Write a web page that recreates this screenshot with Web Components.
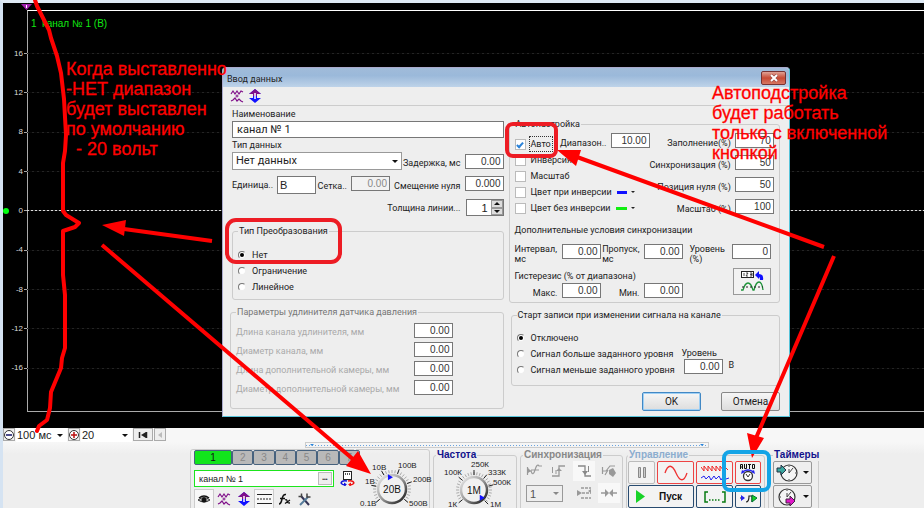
<!DOCTYPE html>
<html lang="ru">
<head>
<meta charset="utf-8">
<title>Осциллограф</title>
<style>
html, body { height: 100%; margin: 0; }
body { font: 9px/12px "Liberation Sans", sans-serif; color: #222; background: #eee; overflow: hidden; }
</style>
</head>
<body>
<app-window></app-window>
<script>
const base = `
*, *::before { box-sizing: border-box; }
:host { display: block; box-sizing: border-box; }
:host([hidden]) { display: none; }
button, input, select { font: inherit; color: inherit; margin: 0; padding: 0; border-radius: 0; }
button { display: grid; place-items: center; }
svg { display: block; fill: none; }
`;
function element(name, css, html) {
  customElements.define(name, class extends HTMLElement {
    connectedCallback() {
      if (this.shadowRoot) return;
      const a = (k, d = '') => this.getAttribute(k) ?? d;
      this.attachShadow({ mode: 'open' }).innerHTML =
        `<style>${base}${css}</style>${typeof html === 'function' ? html(a, this) : html}`;
    }
  });
}

/* ---------- small controls ---------- */
element('num-field', `
:host { display: flex; align-items: center; justify-content: flex-end; gap: 4px; }
label { line-height: 10px; flex: 1; text-align: right; white-space: nowrap; padding-top: 4px; }
:host([left]) label { text-align: left; }
:host([wrap]) label { white-space: pre-line; padding: 0; }
:host([dim]) label { color: #aaa; }
input { width: 39px; height: 15px; flex: none; border: 1px solid #777; background: #fff; text-align: right; font: 10px "Liberation Sans", sans-serif; padding-right: 2px; color: #333; outline: none; }
:host([bare]) label { display: none; }
input:disabled { background: #f2f2f2; color: #888; }
`, a => `<label for="f">${a('label')}</label><input id="f" aria-label="${a('label')}" value="${a('value')}" ${a('off', null) !== null ? 'disabled' : ''}>`);

element('choice-item', `
:host { display: block; }
label { display: flex; align-items: center; gap: 5px; height: 16px; white-space: nowrap; }
input { appearance: none; flex: none; width: 11px; height: 11px; display: grid; place-items: center; background: #fff; border: 1px solid #bbb; }
input[type=radio] { width: 8px; height: 8px; border-radius: 50%; border-color: #777 #eee #eee #777; }
:host([type=radio]) label { gap: 6px; }
input[type=radio]:checked::before { content: ""; width: 4px; height: 4px; border-radius: 50%; background: #000; }
input[type=checkbox]:checked::before { content: ""; width: 4px; height: 7px; border: solid #2a82d8; border-width: 0 2px 2px 0; transform: rotate(42deg); }
:host([focus]) span { outline: 1px dotted #333; outline-offset: 1px; }
i { width: 13px; height: 3px; background: var(--swatch); }
b { border: 2px solid transparent; border-top-color: #222; border-bottom: 0; margin-left: -1px; }
`, (a, el) => `<label><input type="${a('type', 'checkbox')}" ${el.hasAttribute('checked') ? 'checked' : ''}><span>${a('label')}</span>${el.hasAttribute('swatch') ? '<i></i><b></b>' : ''}</label>`);

element('group-box', `
fieldset { margin: 0; min-width: 0; border: 1px solid #ccc; border-radius: 3px; padding: var(--pad, 0 6px); height: 100%; }
legend { padding: 0 1px; margin-left: var(--legend, 0); line-height: 12px; white-space: nowrap; }
:host([dim]) legend { color: #777; }
:host([strong]) legend { font-weight: bold; font-size: 10px; color: var(--ink); }
`, a => `<fieldset><legend>${a('label')}</legend><slot></slot></fieldset>`);

element('drop-down', `
:host { display: grid; }
select { appearance: none; grid-area: 1/1; width: 100%; height: 100%; border: 1px solid var(--line, #999); background: var(--fill, #fff); padding-left: var(--inset, 3px); font-size: 11px; outline: none; }
i { grid-area: 1/1; place-self: center end; margin-right: 4px; border: 3px solid transparent; border-top-color: var(--arrow, #111); border-bottom: 0; pointer-events: none; }
`, a => `<select aria-label="${a('label')}"><option>${a('value')}</option></select><i></i>`);

element('rotary-knob', `svg { width: 100%; overflow: visible; font: 8px "Liberation Sans", sans-serif; }`, (a, el) => {
  const marks = JSON.parse(a('marks')), r = +a('r'), cx = +a('cx'), cy = +a('cy'), p = +a('point');
  let ticks = '';
  for (let d = -220; d <= 40; d += 10) {
    const t = d * Math.PI / 180;
    ticks += `<path d="M${cx + Math.cos(t) * (r + 1)} ${cy + Math.sin(t) * (r + 1)}L${cx + Math.cos(t) * (r + 4)} ${cy + Math.sin(t) * (r + 4)}" stroke="#aaa"/>`;
  }
  marks.forEach(m => { const t = m[3] * Math.PI / 180;
    ticks += `<path d="M${cx + Math.cos(t) * (r + 1)} ${cy + Math.sin(t) * (r + 1)}L${cx + Math.cos(t) * (r + 6)} ${cy + Math.sin(t) * (r + 6)}" stroke="#222"/><text x="${m[1]}" y="${m[2]}" fill="#222">${m[0]}</text>`; });
  const t = p * Math.PI / 180, px = cx + Math.cos(t) * (r - 3), py = cy + Math.sin(t) * (r - 3);
  return `<svg viewBox="0 0 ${a('w')} 54"><defs><linearGradient id="g" x1="0" y1="0" x2="1" y2="1"><stop stop-color="#eee"/><stop offset=".5" stop-color="#999"/><stop offset="1" stop-color="#111"/></linearGradient></defs>
  ${ticks}<circle cx="${cx}" cy="${cy}" r="${r - 1}" fill="#f1f1f1" stroke="url(#g)" stroke-width="2.5"/>
  <path d="M${px - 2} ${py - 3}l5 3-5 3z" fill="#11f"/>
  <text x="${cx}" y="${cy + 4}" text-anchor="middle" fill="#111" font-size="10">${a('value')}</text></svg>`;
});

/* ---------- icons ---------- */
const I = (w, h, s) => `<svg width="${w}" height="${h}" viewBox="0 0 ${w} ${h}" aria-hidden="true">${s}</svg>`;
const icons = {
  waves: I(14, 14, '<path d="M1 5l2-3 2 3 2-3 2 3 2-3 2 1M1 12l2-1 2-2 2 3 2-2 2 2 2 1" stroke="#80108a" stroke-width="1.2"/><path d="M7 5.500v3M5.500 7h3" stroke="#80108a"/>'),
  updown: I(12, 14, '<path d="M6 0l6 5H8v4h4l-6 5-6-5h4V5H0z" fill="#11f"/><path d="M6 0l6 5H8v2H4V5H0z" fill="#80108a"/><path d="M6 4v6" stroke="#fff" stroke-width="1.500"/>'),
  sync: I(24, 20, '<rect x="1.500" y=".5" width="12" height="6" fill="#fff" stroke="#222"/><path d="M4 2v3M6 2h2L6 5h2M10 2h2v3h-2m0-1.500h2" stroke="#222" stroke-width=".8"/><path d="M15 4l4-4v3q5 0 4 6h-3q0-3-1-3v2z" fill="#11f"/><path d="M1 19h2q2-7 5-7t5 7h1q2-8 5-8t4 8" stroke="#1d9438" stroke-width="1.300"/><path d="M2 16h21" stroke="#222" stroke-dasharray="2 2"/>'),
  eye: I(12, 10, '<path d="M1 4q5-4 10 0" stroke="#111" stroke-width="1.500"/><path d="M0 6q6-5 12 0-6 4-12 0z" fill="#bbb" stroke="#333"/><circle cx="6" cy="6" r="2.500" fill="#111"/>'),
  lines: I(15, 12, '<path d="M0 1.500h15M0 10.500h15" stroke="#222"/><path d="M0 6h15" stroke="#222" stroke-dasharray="2 1"/>'),
  fx: I(13, 12, '<path d="M1 11q2 0 3-5t4-4.500M2 5.500h5" stroke="#111" stroke-width="1.500"/><path d="M7 7q2-1 2 1t3 2M12 7L7 10.500" stroke="#111" stroke-width="1.300"/>'),
  tools: I(13, 13, '<path d="M3 3l8 9" stroke="#335" stroke-width="2"/><path d="M10 4L2 12" stroke="#567c9b" stroke-width="2"/><path d="M9 0.500l0 3.500 3.500 0M0.500 3.500h3V.5" stroke="#444" stroke-width="1.500"/>'),
  swap: I(15, 15, '<rect x="3.500" y=".5" width="8" height="8" fill="#fff" stroke="#222"/><path d="M5.500 2v2M7.500 2v2M9.500 2v2" stroke="#555"/><path d="M7 10q-5-1-6 2 1 2 5 2" stroke="#11d" stroke-width="1.300"/><path d="M8 10q5-1 6 2-1 2-5 2" stroke="#e11" stroke-width="1.300"/><path d="M4 11.500l3 2-3 1.500z" fill="#11d"/><path d="M11 11.500l-3 2 3 1.500z" fill="#e11"/>'),
  pause: I(10, 13, '<path d="M1.500 1.500h2v10h-2zM6.500 1.500h2v10h-2z" fill="#ccc" stroke="#888"/>'),
  sine: I(24, 16, '<path d="M1 8C4-1 8-1 12 8s8 9 11 0" stroke="#e33" stroke-width="1.300"/>'),
  double: I(28, 18, '<path d="M0 3l3 4V2l4 5V2l4 5V2l4 5V2l4 5V2l4 5V2l4 4" stroke="#e22"/><path d="M0 14l3-2 2 3 3-3 2 4 3-4 2 3 3-3 2 4 3-4 2 3 3-1" stroke="#22e"/>'),
  auto: I(18, 18, '<path d="M1.500 5V.5h2V5M1.500 3h2M5.500 0v4.500h2V0M9 .5h3M10.500 1v4M13.500.5h2v4h-2z" stroke="#111"/><circle cx="9" cy="12" r="4.500" fill="#fff" stroke="#333" stroke-width="1.300"/><path d="M7 10l2 3 2-3" stroke="#333"/><path d="M4 7.500q5-3 10 0" stroke="#22e" stroke-width="1.300"/><path d="M2 10l1-4 3 2zM16 10l-1-4-3 2z" fill="#22e"/>'),
  play: I(9, 13, '<path d="M0 0l9 6.500L0 13z" fill="#17d227"/>'),
  brackets: I(22, 12, '<path d="M4 1H1v10h3M18 1h3v10h-3" stroke="#087b12" stroke-width="1.500"/><path d="M5 9h12" stroke="#087b12" stroke-width="1.500" stroke-dasharray="1.500 1.500"/>'),
  step: I(18, 14, '<path d="M1 1h15" stroke="#222" stroke-dasharray="2 1"/><path d="M1 8h4M7 12q3 0 3-6h3v6" stroke="#222" stroke-width="1.200"/><path d="M2 5l4 3-4 3z" fill="#22e"/><path d="M13 5l5 3-5 4z" fill="#17d227" stroke="#073"/>'),
  timerIn: I(24, 18, '<circle cx="13" cy="9" r="8" fill="#f5f5f5" stroke="#333" stroke-width="1.200"/><path d="M13 9l4-5M13 9V5M13 2v1M20 9h-1M13 16v-1" stroke="#444"/><path d="M1 4h4V1l5 5-5 5V8H1z" fill="#3aa79f" stroke="#234"/>'),
  timerOut: I(24, 18, '<circle cx="11" cy="9" r="8" fill="#f5f5f5" stroke="#333" stroke-width="1.200"/><path d="M11 9l4-5M11 9V5M11 2v1M4 9h1" stroke="#444"/><path d="M10 11h4V8l5 5-5 5v-3h-4z" fill="#e018c8" stroke="#424"/>'),
  s1: I(16, 14, '<path d="M1.500 3v8M2 7h3q2 6 4-1t4-4h3M5 6h8" stroke="#999" stroke-width="1.200"/><path d="M2 4l3 3-3 2z" fill="#999"/>'),
  s2: I(16, 14, '<path d="M1 12h7V2h6" stroke="#999" stroke-width="1.300"/><path d="M1.500 3v6M5 10V6" stroke="#999"/><path d="M5 7l3-3 3 3z" fill="#999"/>'),
  s3: I(16, 14, '<path d="M2 2h7v10h6" stroke="#888" stroke-width="1.300"/><path d="M6 7l3 4 3-4z" fill="#888"/><path d="M12.500 2v6" stroke="#888"/>'),
  s4: I(16, 14, '<path d="M1.500 3v7M2 7h3l4-5h5M4 11l3-5" stroke="#999" stroke-width="1.200"/><path d="M8 6l4-2 3 5-3 4-4-3z" fill="#999"/>'),
  s5: I(16, 14, '<path d="M5 2h10M6 7h9M5 12h10" stroke="#999" stroke-width="1.300" stroke-dasharray="3 1"/><path d="M1 4l5 3-5 3zM15 3l-3 2 3 2z" fill="#999"/>'),
  s6: I(16, 14, '<path d="M0 7h7M9 7h7" stroke="#999" stroke-width="1.500"/><path d="M4 3l4 4-4 4zM12 3L8 7l4 4z" fill="#999"/>'),
  minus: I(10, 10, '<circle cx="5" cy="5" r="4.500" fill="#fff" stroke="#333"/><path d="M2 5h6" stroke="#116" stroke-width="1.500"/>'),
  plus: I(10, 10, '<circle cx="5" cy="5" r="4.500" fill="#fff" stroke="#333"/><path d="M2 5h6M5 2v6" stroke="#b11" stroke-width="1.500"/>'),
  first: I(10, 8, '<path d="M1.500 1v6M8.500 1v6" stroke="#222" stroke-width="1.500"/><path d="M8 1v6L3 4z" fill="#222"/>'),
  prev: I(6, 8, '<path d="M5 1v6L1 4z" fill="#bbb"/>'),
  close: I(10, 8, '<path d="M2 1l6 6M8 1L2 7" stroke="#844" stroke-width="3"/><path d="M2 1l6 6M8 1L2 7" stroke="#fff" stroke-width="2"/>')
};
element('app-icon', ':host { display: inline-block; }', a => icons[a('name')]);

/* ---------- oscilloscope screen ---------- */
element('scope-view', `
:host { background: #000; display: grid; grid-template-columns: 24px 1fr; padding: 7px 0 16px; color: #ddd; }
.frame { grid-area: 1/2; border: solid #aaa; border-width: 1px 0 1px 1px; border-top-color: #fff; color: #12e812; font: 10px/12px "Liberation Sans", sans-serif; padding: 7px 3px; white-space: pre; }
.rows { grid-area: 1/1/2/3; display: grid; grid-auto-rows: 1fr; padding: 24px 0; }
.row { display: grid; grid-template-columns: 21px 3px 1fr; align-items: center; font-size: 8px; }
.row span { text-align: right; padding-right: 1px; }
.row i { height: 1px; background: #aaa; }
.row b { height: 1px; background: repeating-linear-gradient(90deg, #242424 0 2px, #080808 2px 5px); }
.row.zero b { background: repeating-linear-gradient(90deg, #ddd 0 2px, #333 2px 4px); }
.zero { position: relative; }
.zero::before { content: ""; position: absolute; left: 0; width: 6px; height: 6px; border-radius: 50%; background: #0f1; }
.mark { grid-area: 1/1; justify-self: end; align-self: start; margin: -6px -5px 0 0; z-index: 1; }
`, () => `<svg class="mark" width="11" height="6"><path d="M0 0h11L5.500 6z" fill="#a020b0"/><path d="M5.500 1v3" stroke="#fff"/></svg>
<div class="frame">1  канал № 1 (В)</div><div class="rows">${['16', '12', '8', '4', '0', '-4', '-8', '-12', '-16'].map(v => `<div class="row ${v === '0' ? 'zero' : ''}"><span>${v}</span><i></i><b></b></div>`).join('')}</div>`);

element('time-bar', `
:host { display: flex; gap: 1px; background: #f7f7f7; height: 14px; font-size: 10px; }
button { width: 12px; height: 13px; border: 1px solid #aaa; background: #eee; }
.wide { width: 20px; }
drop-down { --line: #fff; --inset: 0; height: 13px; width: 51px; }
`, `<button aria-label="Уменьшить"><app-icon name="minus"></app-icon></button><drop-down label="Развертка" value="100 мс"></drop-down>
<button aria-label="Увеличить"><app-icon name="plus"></app-icon></button><drop-down label="Шкала" value="20"></drop-down>
<button class="wide" aria-label="В начало"><app-icon name="first"></app-icon></button><button aria-label="Назад"><app-icon name="prev"></app-icon></button>`);

/* ---------- bottom control panel ---------- */
element('channel-panel', `
.tabs { display: flex; }
.tabs button { flex: 1; height: 15px; border: 1px solid #47627e; border-radius: 2px; background: #b9b9b9; color: #888; font-size: 10px; }
.tabs .on { flex: 0 0 38px; background: #12e41c; color: #111; }
.name { display: flex; gap: 3px; margin-top: 5px; }
.box { flex: 0 0 140px; display: flex; height: 17px; border: 1px solid #1de51d; background: #fff; padding: 1px; }
.box input { flex: 1; min-width: 0; border: 0; padding-left: 3px; outline: none; font-size: 9px; }
.box button { width: 14px; border: 1px solid #bbb; background: #eee; font-size: 5px; line-height: 8px; }
.tools { display: flex; margin-top: 2px; }
.tools button, .name > button { width: 20px; height: 20px; border: 0; background: none; }
.name > button { height: 17px; }
.tools .down { background: #f8f8f8; border: 1px solid #ccc; }
`, `<div class="tabs"><button class="on">1</button>${[2, 3, 4, 5, 6, 7].map(n => `<button>${n}</button>`).join('')}</div>
<div class="name"><div class="box"><input aria-label="Имя канала" value="канал № 1"><button aria-label="Выбрать">•••</button></div><button aria-label="Обмен"><app-icon name="swap"></app-icon></button></div>
<div class="tools">${['eye', 'waves', 'updown', 'lines', 'fx', 'tools'].map(n => `<button aria-label="${n}" class="${n === 'eye' || n === 'lines' ? 'down' : ''}"><app-icon name="${n}"></app-icon></button>`).join('')}</div>`);

element('sync-panel', `
:host { display: grid; grid-template-columns: repeat(4, 22px); justify-content: space-between; gap: 2px 0; }
button { height: 20px; border: 0; background: none; }
.lit { background: #f8f8f8; }
drop-down { grid-column: span 2; height: 17px; margin: 2px 0 0 3px; --line: #999; --fill: #eee; --arrow: #888; width: 37px; color: #555; }
`, `<button aria-label="Спад"><app-icon name="s1"></app-icon></button><button aria-label="Фронт"><app-icon name="s2"></app-icon></button><button class="lit" aria-label="Срез"><app-icon name="s3"></app-icon></button><button aria-label="Ручная"><app-icon name="s4"></app-icon></button>
<drop-down label="Канал" value="1"></drop-down><button aria-label="Уровень"><app-icon name="s5"></app-icon></button><button class="lit" aria-label="Сжать"><app-icon name="s6"></app-icon></button>`);

element('run-panel', `
:host { display: grid; gap: 1px; }
div { display: grid; grid-template-columns: 27px 37px 37px 26px; gap: 2px; }
div + div { grid-template-columns: 66px 37px 26px; }
button { height: 23px; border: 1px solid #284b70; border-radius: 2px; background: #f3f3f3; overflow: hidden; }
.off { border-color: #bbb; }
.red { border-color: #e44; }
.go { display: flex; align-items: center; justify-content: flex-start; gap: 14px; padding-left: 7px; font: bold 10px "Liberation Sans", sans-serif; color: #111; }
`, `<div><button class="off" aria-label="Пауза"><app-icon name="pause"></app-icon></button><button aria-label="Синус" class="red"><app-icon name="sine"></app-icon></button><button class="red" aria-label="Сигналы"><app-icon name="double"></app-icon></button><button class="red" aria-label="Автоподстройка"><app-icon name="auto"></app-icon></button></div>
<div><button class="go"><app-icon name="play"></app-icon>Пуск</button><button aria-label="Диапазон"><app-icon name="brackets"></app-icon></button><button aria-label="Шаг"><app-icon name="step"></app-icon></button></div>`);

element('timer-panel', `
:host { display: grid; gap: 1px; }
button { display: flex; align-items: center; justify-content: center; gap: 3px; height: 23px; border: 1px solid #999; border-radius: 2px; background: #eee; }
i { border: 3px solid transparent; border-top-color: #111; border-bottom: 0; }
`, `<button aria-label="Таймер пуска"><app-icon name="timerIn"></app-icon><i></i></button><button aria-label="Таймер остановки"><app-icon name="timerOut"></app-icon><i></i></button>`);

element('control-panel', `
:host { background: linear-gradient(#f7f7f7, #eee 12px); height: 66px; overflow: hidden; }
.splitter { height: 6px; width: 404px; margin-left: 302px; display: flex; align-items: center; justify-content: space-between; border: 1px solid #ccc; padding: 0 4px; background: repeating-linear-gradient(90deg, #69a4e0 0 1px, transparent 1px 3px) center / 100% 1px no-repeat; }
.splitter i { border: 2px solid transparent; border-top-color: #2d86da; border-bottom: 0; }
.groups { display: flex; padding: 1px 0 0 187px; align-items: stretch; height: 70px; }
group-box { --pad: 0 2px; margin-right: 3px; }
.scale { width: 74px; margin-top: 12px; }
.chan { --pad: 0 3px; --legend: 160px; width: 240px; }
.chan > div { display: grid; grid-template-columns: 166px 1fr; margin-top: -11px; }
.chan channel-panel { padding-top: 11px; }
.freq { width: 84px; --ink: #12128c; } .sync { width: 103px; --ink: #888; } .run { width: 139px; --ink: #8cadcf; --pad: 0 1px; } .time { width: 51px; --ink: #12128c; --pad: 0 6px 0 4px; }
.freq rotary-knob { margin-top: -4px; }
`, `<div class="splitter"><i></i><i></i></div><div class="groups">
<group-box class="chan" label=""><div><channel-panel></channel-panel><rotary-knob class="scale" w="74" cx="32" cy="38" r="15" point="-100" value="20В" marks='[["0.1В",0,55,140],["1В",5,33,190],["10В",12,19,-120],["100В",38,17,-70],["200В",53,31,-20],["500В",49,55,40]]'></rotary-knob></div></group-box>
<group-box strong class="freq" label="Частота"><rotary-knob w="78" cx="38" cy="33" r="14" point="45" value="1М" marks='[["1К",12,50,140],["100К",8,18,-140],["250К",35,10,-90],["333К",52,18,-50],["500К",57,28,-15],["1М",54,50,45]]'></rotary-knob></group-box>
<group-box strong class="sync" label="Синхронизация"><sync-panel></sync-panel></group-box>
<group-box strong class="run" label="Управление"><run-panel></run-panel></group-box>
<group-box strong class="time" label="Таймеры"><timer-panel></timer-panel></group-box></div>`);

/* ---------- data entry dialog ---------- */
element('data-dialog', `
:host { font-family: Roboto, sans-serif; background: #eee; border: 1px solid #58b8d8; border-color: #aac #58c4da #58c4da #aac; border-radius: 4px 4px 0 0; padding: 0 7px 5px; }
header { display: flex; justify-content: space-between; align-items: center; height: 19px; margin: 0 -7px; padding: 0 3px 0 4px; background: linear-gradient(#a0bbd9, #9bb9da 40%, #bed3e9); border-radius: 3px 3px 0 0; }
h1 { font-size: 9px; font-weight: 400; margin: 2px 0 0; }
header button { width: 25px; height: 14px; border: 1px solid #733; background: linear-gradient(#e0a295, #c74a34 50%, #d77762); border-radius: 2px; }
.bar { display: flex; gap: 4px; align-items: center; height: 19px; border-bottom: 1px solid #ccc; margin-right: -7px; }
.bar button { border: 0; background: none; width: 14px; height: 15px; }
.cols { display: grid; grid-template-columns: minmax(0, 1fr) minmax(0, 1fr); gap: 0 5px; }
.cols > :last-child { padding-right: 2px; }
.left { display: grid; align-content: start; padding-top: 1px; }
.left > label { line-height: 13px; padding-left: 2px; margin-top: 1px; }
.title { height: 17px; margin-left: 2px; border: 1px solid #777; padding-left: 4px; font-size: 11px; background: #fff; outline: none; width: calc(100% - 2px); }
.type { display: flex; justify-content: space-between; align-items: center; padding-left: 2px; }
.type drop-down { width: 170px; height: 18px; }
.units { display: grid; grid-template-columns: 88px 71px 1fr; padding-left: 2px; margin-top: 6px; align-items: start; }
.unit { display: flex; align-items: center; gap: 4px; }
.unit input { width: 39px; height: 18px; border: 1px solid #777; font: 11px "Liberation Sans", sans-serif; padding-left: 2px; }
.units num-field[left] { padding-right: 1px; }
.thick { display: flex; justify-content: flex-end; align-items: center; gap: 5px; margin-top: 5px; }
.spin { display: flex; width: 38px; height: 17px; border: 1px solid #777; background: #fff; }
.spin input { width: 24px; border: 0; text-align: right; padding-right: 3px; font: 11px "Liberation Sans", sans-serif; outline: none; }
.spin div { width: 12px; display: grid; grid-template-rows: 1fr 1fr; }
.spin button { border: 1px solid #999; background: #ddd; min-height: 0; line-height: 5px; }
.spin i { border: 3px solid transparent; border-bottom: 3px solid #111; border-top: 0; } .spin button + button i { rotate: 180deg; }
.kind { height: 75px; margin: 9px 0 0 2px; --pad: 10px 5px 0; }
.ext { height: 103px; margin-top: 6px; --pad: 5px 50px 0 5px; color: #222; }
.ext num-field { height: 19px; align-items: start; }
.auto { height: 185px; margin-top: 12px; --pad: 3px 8px 0 5px; }
.grid { display: grid; grid-template-columns: 92px 1fr; height: 87px; }
.checks { grid-area: 1/1; padding-top: 3px; }
.checks choice-item { width: 120px; }
.nums { display: grid; grid-area: 1/2; grid-template-columns: 43px 1fr; align-content: start; row-gap: 7px; }
.nums num-field { grid-column: 2; }
.nums .range { grid-column: 1; grid-row: 1; width: 84px; margin-left: -41px; }
p { margin: 4px 0 0; }
.cond { display: grid; grid-template-columns: 86px 82px 1fr; margin-top: 8px; }
.cond num-field { align-items: start; }
.cond num-field + num-field { margin-left: 2px; }
.cond num-field:last-child { margin-left: 7px; }
.hyst { display: grid; grid-template-columns: 86px 82px 1fr; align-items: end; }
.hyst p { grid-column: 1 / 3; margin: 6px 0 0; padding-bottom: 1px; }
.hyst button { grid-area: 1 / 3 / 3 / 4; justify-self: end; align-self: center; width: 38px; height: 27px; border: 1px solid #999; background: #f2f2f2; }
.start { height: 77px; margin: 6px 0 0 2px; --pad: 9px 5px 0; }
.pair { display: grid; grid-template-columns: 167px 1fr; }
.level { display: grid; grid-template-columns: 39px 1fr; gap: 0 6px; align-content: start; padding-top: 17px; }
.level span:first-child { grid-column: 1/3; margin-left: -2px; }
footer { display: flex; justify-content: flex-end; gap: 20px; margin-top: 6px; }
footer button { width: 59px; height: 19px; border: 1px solid #888; border-radius: 2px; background: linear-gradient(#f6f6f6, #ddd); font-size: 10px; }
footer .ok { border-color: #4288c4; box-shadow: inset 0 0 0 1px #9fd0f5; }
`, `<header><h1>Ввод данных</h1><button aria-label="Закрыть"><app-icon name="close"></app-icon></button></header>
<div class="bar"><button aria-label="Сигналы"><app-icon name="waves"></app-icon></button><button aria-label="Сдвиг"><app-icon name="updown"></app-icon></button></div>
<div class="cols"><div class="left">
<label for="nm">Наименование</label><input class="title" id="nm" value="канал № 1">
<label>Тип данных</label>
<div class="type"><drop-down label="Тип данных" value="Нет данных"></drop-down><num-field label="Задержка, мс" value="0.00"></num-field></div>
<div class="units"><label class="unit">Единица..<input value="В"></label><num-field left label="Сетка.." value="0.00" off></num-field><num-field label="Смещение нуля" value="0.000"></num-field></div>
<div class="thick"><label for="th">Толщина линии...</label><div class="spin"><input id="th" value="1"><div><button aria-label="Больше"><i></i></button><button aria-label="Меньше"><i></i></button></div></div></div>
<group-box class="kind" label="Тип Преобразования"><choice-item type="radio" label="Нет" checked></choice-item><choice-item type="radio" label="Ограничение"></choice-item><choice-item type="radio" label="Линейное"></choice-item></group-box>
<group-box dim class="ext" label="Параметры удлинителя датчика давления"><num-field dim left label="Длина канала удлинителя, мм" value="0.00"></num-field><num-field dim left label="Диаметр канала, мм" value="0.00"></num-field><num-field dim left label="Длина дополнительной камеры, мм" value="0.00"></num-field><num-field dim left label="Диаметр дополнительной камеры, мм" value="0.00"></num-field></group-box>
</div><div>
<group-box class="auto" label="Автонастройка"><div class="grid"><div class="checks"><choice-item focus checked label="Авто"></choice-item><choice-item label="Инверсия"></choice-item><choice-item label="Масштаб"></choice-item><choice-item swatch style="--swatch:#11f" label="Цвет при инверсии"></choice-item><choice-item swatch style="--swatch:#1e1" label="Цвет без инверсии"></choice-item></div>
<div class="nums"><num-field class="range" label="Диапазон.." value="10.00"></num-field><num-field label="Заполнение(%)" value="70"></num-field><num-field label="Синхронизация (%)" value="50"></num-field><num-field label="Позиция нуля (%)" value="50"></num-field><num-field label="Масштаб (%)" value="100"></num-field></div></div>
<p>Дополнительные условия синхронизации</p>
<div class="cond"><num-field left wrap label="Интервал,&#10;мс" value="0.00"></num-field><num-field left wrap label="Пропуск,&#10;мс" value="0.00"></num-field><num-field left wrap label="Уровень&#10;(%)" value="0"></num-field></div>
<div class="hyst"><p>Гистерезис (% от диапазона)</p><num-field label="Макс." value="0.00"></num-field><num-field label="Мин." value="0.00"></num-field><button aria-label="Рассчитать"><app-icon name="sync"></app-icon></button></div></group-box>
<group-box class="start" label="Старт записи при изменении сигнала на канале"><div class="pair"><div><choice-item type="radio" checked label="Отключено"></choice-item><choice-item type="radio" label="Сигнал больше заданного уровня"></choice-item><choice-item type="radio" label="Сигнал меньше заданного уровня"></choice-item></div><div class="level"><span>Уровень</span><num-field bare label="Уровень" value="0.00"></num-field><span>В</span></div></div></group-box>
<footer><button class="ok">OK</button><button>Отмена</button></footer>
</div></div>`);

/* ---------- hand-drawn notes over the window ---------- */
element('note-layer', `
:host { pointer-events: none; }
svg { width: 100%; height: 100%; font: 18px "Liberation Sans", sans-serif; }
text { fill: red; stroke: red; stroke-width: .3; white-space: pre; }
`, () => {
  const lines = (x, y, list) => list.map((t, i) => `<text x="${x}" y="${y + i * 20}">${t}</text>`).join('');
  return `<svg viewBox="0 0 924 508"><g stroke="red" stroke-width="4" stroke-linejoin="round">
<path stroke-linecap="round" d="M35 0l2 6 12 24 2 8 6 18 4 17 3 26 2 36-1 16-2 12v48l3 4 13 8-4 4-12 4v44l2 20v53l-3 10-1 10-10 24-1 16-3 12-8 6-2 5"/>
<path d="M212 241L124 229M102 245L354 460M824 247L577 157M834 256L756 438"/></g>
<path fill="red" d="M102 225l24-5-2 16zM371 474l-13-23-12 15zM557 150l24 0-5 16zM752 458l-5-25 17 5z"/>
<g stroke="#ed1c24" stroke-width="4"><rect x="227" y="220" width="113" height="42" rx="9"/><rect x="507" y="124" width="49" height="32" rx="6"/></g>
<rect x="724" y="452" width="45" height="38" rx="6" stroke="#14a4e6" stroke-width="4"/>
${lines(66, 75, ['Когда выставленно', '-НЕТ диапазон', 'будет выставлен', 'по умолчанию', '  - 20 вольт'])}
${lines(712, 99, ['Автоподстройка', 'будет работать', 'только с включенной', 'кнопкой'])}</svg>`;
});

element('app-window', `
:host { position: relative; display: flex; flex-direction: column; min-height: 100vh; border-left: 3px solid #d5e3f2; border-top: 3px solid #dfeaf5; }
scope-view { flex: 1; }
data-dialog { position: absolute; left: 219px; right: 134px; top: 64px; }
note-layer { position: absolute; inset: -3px 0 0 -3px; }
`, '<scope-view></scope-view><time-bar></time-bar><control-panel></control-panel><data-dialog></data-dialog><note-layer></note-layer>');
</script>
</body>
</html>
